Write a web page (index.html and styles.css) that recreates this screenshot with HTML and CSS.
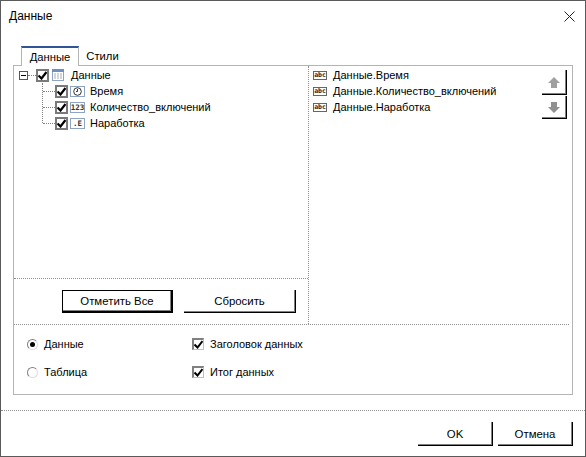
FILE: index.html
```html
<!DOCTYPE html>
<html lang="ru">
<head>
  <meta charset="UTF-8" />
  <title>Данные</title>
  <link rel="stylesheet" href="styles.css">
</head>
<body>
  <div class="dialog">
    <div class="titlebar">
      <span class="caption">Данные</span>
      <svg class="close" width="11" height="11" viewBox="0 0 11 11"><path d="M0.5 0.5L10.5 10.5M10.5 0.5L0.5 10.5" stroke="#222" fill="none"/></svg>
    </div>
    <div class="tabs">
      <div class="tab active">Данные</div>
      <div class="tab">Стили</div>
    </div>
    <div class="panel">
      <div class="panes">
        <div class="left-pane">
          <div class="tree">
            <div class="tree-row root">
              <span class="expander"></span>
              <span class="dash"></span>
              <span class="check"><svg width="9" height="9" viewBox="0 0 9 9"><path d="M0.5 4.5L3.5 7.5L8.5 1" stroke="#000" stroke-width="2.2" fill="none"/></svg></span>
              <svg class="table-icon" width="12" height="12" viewBox="0 0 12 12"><rect x="0.5" y="0.5" width="11" height="11" fill="#fff" stroke="#8ea4c4"/><rect x="0" y="0" width="12" height="3" fill="#6f8fc0"/><path d="M2 5h2M5 5h2M8 5h2M2 7h2M5 7h2M8 7h2M2 9h2M5 9h2M8 9h2" stroke="#a9a9b8" fill="none"/></svg>
              <span class="label">Данные</span>
            </div>
            <div class="children">
              <div class="tree-row child">
                <span class="dash"></span>
                <span class="check"><svg width="9" height="9" viewBox="0 0 9 9"><path d="M0.5 4.5L3.5 7.5L8.5 1" stroke="#000" stroke-width="2.2" fill="none"/></svg></span>
                <span class="type-icon"><svg width="9" height="9" viewBox="0 0 9 9"><circle cx="4.5" cy="4.5" r="3.8" fill="none" stroke="#333"/><path d="M4.5 2v2.5h-1.5" stroke="#333" fill="none"/></svg></span>
                <span class="label">Время</span>
              </div>
              <div class="tree-row child">
                <span class="dash"></span>
                <span class="check"><svg width="9" height="9" viewBox="0 0 9 9"><path d="M0.5 4.5L3.5 7.5L8.5 1" stroke="#000" stroke-width="2.2" fill="none"/></svg></span>
                <span class="type-icon num">123</span>
                <span class="label">Количество_включений</span>
              </div>
              <div class="tree-row child">
                <span class="dash"></span>
                <span class="check"><svg width="9" height="9" viewBox="0 0 9 9"><path d="M0.5 4.5L3.5 7.5L8.5 1" stroke="#000" stroke-width="2.2" fill="none"/></svg></span>
                <span class="type-icon num">.E</span>
                <span class="label">Наработка</span>
              </div>
            </div>
          </div>
          <div class="left-actions">
            <button class="btn default mark-all">Отметить Все</button>
            <button class="btn reset">Сбросить</button>
          </div>
        </div>
        <div class="right-pane">
          <div class="fields">
            <div class="field"><span class="abc">abc</span><span>Данные.Время</span></div>
            <div class="field"><span class="abc">abc</span><span>Данные.Количество_включений</span></div>
            <div class="field"><span class="abc">abc</span><span>Данные.Наработка</span></div>
          </div>
          <div class="movers">
            <button class="btn mover up"><svg width="12" height="11" viewBox="0 0 12 11"><path d="M6 0L12 6H9V11H3V6H0Z" fill="#a0a0a0"/></svg></button>
            <button class="btn mover down"><svg width="12" height="11" viewBox="0 0 12 11"><path d="M6 11L12 5H9V0H3V5H0Z" fill="#909090"/></svg></button>
          </div>
        </div>
      </div>
      <div class="options">
        <div class="radios">
          <label class="option"><span class="radio on"></span>Данные</label>
          <label class="option"><span class="radio"></span>Таблица</label>
        </div>
        <div class="flags">
          <label class="option"><span class="flag"><svg width="9" height="9" viewBox="0 0 9 9"><path d="M0.5 4.5L3.5 7.5L8.5 1" stroke="#000" stroke-width="2" fill="none"/></svg></span>Заголовок данных</label>
          <label class="option"><span class="flag"><svg width="9" height="9" viewBox="0 0 9 9"><path d="M0.5 4.5L3.5 7.5L8.5 1" stroke="#000" stroke-width="2" fill="none"/></svg></span>Итог данных</label>
        </div>
      </div>
    </div>
    <div class="footer">
      <button class="btn footer-btn">OK</button>
      <button class="btn footer-btn">Отмена</button>
    </div>
  </div>
</body>
</html>
```

FILE: styles.css
```css
html, body {
  margin: 0;
  height: 100%;
}
body {
  font-family: "Liberation Sans", Arial, sans-serif;
  font-size: 11px;
  color: #000;
  background: #fff;
  overflow: hidden;
}
.dialog {
  box-sizing: border-box;
  width: 586px;
  height: 457px;
  border: 1px solid #5a5a5a;
  display: flex;
  flex-direction: column;
}
.titlebar {
  height: 30px;
  display: flex;
  align-items: center;
  justify-content: space-between;
  padding: 0 10px 0 8px;
  font-size: 12px;
}
.tabs {
  height: 19px;
  margin: 15px 0 0 20px;
  display: flex;
}
.tab {
  box-sizing: border-box;
  text-align: center;
  line-height: 20px;
  font-size: 11.25px;
}
.tab.active {
  width: 58px;
  border-top: 2px solid #2f5597;
  border-left: 1px solid #b4b4b4;
  border-right: 1px solid #b4b4b4;
  line-height: 17px;
  padding-top: 1px;
  height: 20px;
  background: #fff;
  position: relative;
  z-index: 1;
}
.tab:not(.active) {
  width: 47px;
}
.panel {
  box-sizing: border-box;
  width: 560px;
  height: 330px;
  margin-left: 12px;
  border: 1px solid #b4b4b4;
  display: flex;
  flex-direction: column;
}
.panes {
  height: 258px;
  display: flex;
  border-bottom: 1px dotted #909090;
  margin-right: 3px;
}
.left-pane {
  width: 294px;
  border-right: 1px dotted #909090;
  display: flex;
  flex-direction: column;
}
.tree {
  height: 213px;
  border-bottom: 1px dotted #909090;
  padding: 1px 0 0 5px;
  box-sizing: border-box;
}
.tree-row {
  height: 16px;
  display: flex;
  align-items: center;
}
.expander {
  box-sizing: border-box;
  width: 9px;
  height: 9px;
  border: 1px solid #555;
  position: relative;
  background: #fff;
}
.expander::after {
  content: "";
  position: absolute;
  left: 1px;
  top: 3px;
  width: 5px;
  height: 1px;
  background: #000;
}
.dash {
  width: 8px;
  border-top: 1px dotted #808080;
}
.check {
  box-sizing: border-box;
  width: 13px;
  height: 13px;
  border: 2px solid #7a7a7a;
  display: flex;
  align-items: center;
  justify-content: center;
  background: #fff;
}
.table-icon {
  margin-left: 3px;
}
.root .label {
  margin-left: 7px;
}
.children {
  margin-left: 23px;
  border-left: 1px dotted #808080;
  height: 40px;
}
.child .dash {
  width: 12px;
}
.type-icon {
  box-sizing: border-box;
  width: 15px;
  height: 11px;
  margin-left: 2px;
  border: 1px solid #8ea4c4;
  display: flex;
  align-items: center;
  justify-content: center;
  font-family: "DejaVu Sans Mono", monospace;
  font-size: 7.5px;
  font-weight: bold;
  line-height: 9px;
  color: #333;
}
.child .label {
  margin-left: 5px;
}
.left-actions {
  display: flex;
  gap: 11px;
  padding: 11px 0 0 48px;
}
.btn {
  box-sizing: border-box;
  padding: 0;
  background: #fff;
  font: inherit;
  font-size: 11.4px;
  color: #000;
  border: none;
  border-right: 1px solid #000;
  border-bottom: 1px solid #000;
  box-shadow: inset -1px -1px 0 #808080;
  display: flex;
  align-items: center;
  justify-content: center;
}
.btn.default {
  border: 1px solid #000;
  border-right-width: 2px;
  border-bottom-width: 2px;
}
.mark-all {
  width: 111px;
  height: 23px;
}
.reset {
  width: 112px;
  height: 23px;
}
.right-pane {
  flex: 1;
  display: flex;
  justify-content: space-between;
  padding: 1px 2px 0 4px;
}
.field {
  height: 16px;
  display: flex;
  align-items: center;
  gap: 6px;
}
.abc {
  box-sizing: border-box;
  width: 14px;
  height: 9px;
  border: 1px solid #666;
  font-family: "DejaVu Sans Mono", monospace;
  font-size: 6.5px;
  font-weight: bold;
  line-height: 7px;
  text-align: center;
  color: #222;
}
.movers {
  display: flex;
  flex-direction: column;
  gap: 1px;
  padding-top: 3px;
}
.mover {
  width: 25px;
}
.mover.up {
  height: 25px;
}
.mover.down {
  height: 23px;
}
.options {
  display: flex;
  flex: 1;
  padding: 5px 0 0 13px;
}
.radios {
  width: 165px;
}
.option {
  height: 28px;
  display: flex;
  align-items: center;
  gap: 6px;
}
.radio {
  box-sizing: border-box;
  width: 11px;
  height: 11px;
  border: 1px solid #ddd;
  border-top-color: #808080;
  border-left-color: #808080;
  border-radius: 50%;
  display: flex;
  align-items: center;
  justify-content: center;
}
.radio.on::after {
  content: "";
  width: 5px;
  height: 5px;
  border-radius: 50%;
  background: #000;
}
.flag {
  box-sizing: border-box;
  width: 12px;
  height: 12px;
  border-style: solid;
  border-width: 2px 1px 1px 2px;
  border-color: #808080 #c0c0c0 #c0c0c0 #808080;
  display: flex;
  align-items: center;
  justify-content: center;
}
.footer {
  margin-top: 15px;
  border-top: 1px dotted #909090;
  display: flex;
  justify-content: flex-end;
  gap: 5px;
  padding: 11px 12px 0 0;
}
.footer-btn {
  width: 75px;
  height: 24px;
}
```
